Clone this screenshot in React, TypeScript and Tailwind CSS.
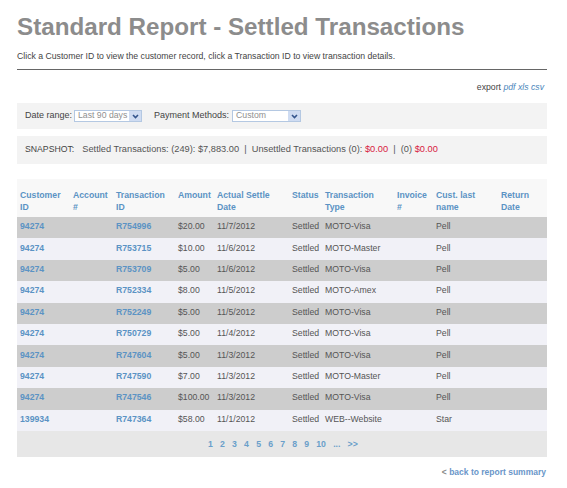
const rows = [
  ["94274", "R754996", "$20.00", "11/7/2012", "MOTO-Visa", "Pell"],
  ["94274", "R753715", "$10.00", "11/6/2012", "MOTO-Master", "Pell"],
  ["94274", "R753709", "$5.00", "11/6/2012", "MOTO-Visa", "Pell"],
  ["94274", "R752334", "$8.00", "11/5/2012", "MOTO-Amex", "Pell"],
  ["94274", "R752249", "$5.00", "11/5/2012", "MOTO-Visa", "Pell"],
  ["94274", "R750729", "$5.00", "11/4/2012", "MOTO-Visa", "Pell"],
  ["94274", "R747604", "$5.00", "11/3/2012", "MOTO-Visa", "Pell"],
  ["94274", "R747590", "$7.00", "11/3/2012", "MOTO-Master", "Pell"],
  ["94274", "R747546", "$100.00", "11/3/2012", "MOTO-Visa", "Pell"],
  ["139934", "R747364", "$58.00", "11/1/2012", "WEB--Website", "Star"],
];

const headers = [
  ["Customer", "ID"],
  ["Account", "#"],
  ["Transaction", "ID"],
  ["Amount"],
  ["Actual Settle", "Date"],
  ["Status"],
  ["Transaction", "Type"],
  ["Invoice", "#"],
  ["Cust. last", "name"],
  ["Return", "Date"],
];

const cols = "grid grid-cols-[53px_43px_62px_39px_75px_33px_72px_39px_65px_46px]";

function Select({ value, width }: { value: string; width: string }) {
  return (
    <div className={`${width} h-[12px] flex items-center justify-between border border-[#b4c8e2] bg-white pl-[3px] text-[8.7px] text-[#8f8f8f]`}>
      <span>{value}</span>
      <span className="w-[12px] h-[10px] bg-[#cfdcf2] flex items-center justify-center">
        <svg width="7" height="5" viewBox="0 0 7 5">
          <path d="M1 1l2.5 2.5L6 1" fill="none" stroke="#34558c" strokeWidth="1.6" />
        </svg>
      </span>
    </div>
  );
}

export default function App() {
  return (
    <div className="w-[567px] h-[488px] bg-white overflow-hidden font-['Liberation_Sans',Arial,sans-serif] text-[8.7px] text-[#555] pl-[17px] pr-[20px] pt-[12px]">
      <h1 className="text-[24.2px] leading-[30px] font-bold text-[#8c8c8c]">Standard Report - Settled Transactions</h1>
      <p className="mt-[9px] leading-[11px] text-[#444]">
        Click a Customer ID to view the customer record, click a Transaction ID to view transaction details.
      </p>
      <div className="mt-[7px] h-px bg-[#666]" />

      <div className="mt-[12px] h-[11px] leading-[11px] text-right pr-[3px] text-[#444]">
        export{" "}
        <span className="italic text-[#4a86bb]">pdf xls csv</span>
      </div>

      <div className="mt-[10px] h-[26px] bg-[#f3f3f3] flex items-center pl-[8px] text-[9px] text-[#444]">
        <span>Date range:</span>
        <div className="ml-[2px]"><Select value="Last 90 days" width="w-[68px]" /></div>
        <span className="ml-[12px]">Payment Methods:</span>
        <div className="ml-[3px]"><Select value="Custom" width="w-[69px]" /></div>
      </div>

      <div className="mt-[7px] h-[28px] bg-[#f3f3f3] flex items-center pl-[8px]">
        <span className="text-[#444] mr-[8px]">SNAPSHOT:</span>
        <span className="text-[#555] text-[9.25px]">
          Settled Transactions: (249): $7,883.00 &nbsp;|&nbsp; Unsettled Transactions (0):{" "}
          <span className="text-[#d8203f]">$0.00</span> &nbsp;|&nbsp; (0){" "}
          <span className="text-[#d8203f]">$0.00</span>
        </span>
      </div>

      <div className="mt-[15px] bg-[#f8f8f8]">
        <div className={`${cols} h-[38px] pl-[3px] pt-[10px] font-bold text-[#5b93c4] leading-[12px]`}>
          {headers.map((h) => (
            <div key={h.join(" ")}>
              {h.map((line) => (
                <div key={line}>{line}</div>
              ))}
            </div>
          ))}
        </div>
        {rows.map((r, i) => (
          <div
            key={r[1]}
            className={`${cols} h-[21.4px] items-center pl-[3px] pb-[2px] ${i % 2 === 0 ? "bg-[#cdcdcd]" : "bg-[#f1f1f7]"}`}
          >
            <div className="font-bold text-[#5b93c4]">{r[0]}</div>
            <div />
            <div className="font-bold text-[#5b93c4]">{r[1]}</div>
            <div>{r[2]}</div>
            <div>{r[3]}</div>
            <div>Settled</div>
            <div>{r[4]}</div>
            <div />
            <div>{r[5]}</div>
            <div />
          </div>
        ))}
        <div className="h-[26.5px] bg-[#e7e7e7] flex items-center pl-[191px] gap-[7.2px] font-bold text-[#6a9fca]">
          {["1", "2", "3", "4", "5", "6", "7", "8", "9", "10", "...", ">>"].map((p) => (
            <span key={p}>{p}</span>
          ))}
        </div>
      </div>

      <div className="mt-[10px] leading-[11px] text-right font-bold text-[8.5px] text-[#6a96c9] pr-px">
        <span className="text-[#888]">&lt;</span> back to report summary
      </div>
    </div>
  );
}
